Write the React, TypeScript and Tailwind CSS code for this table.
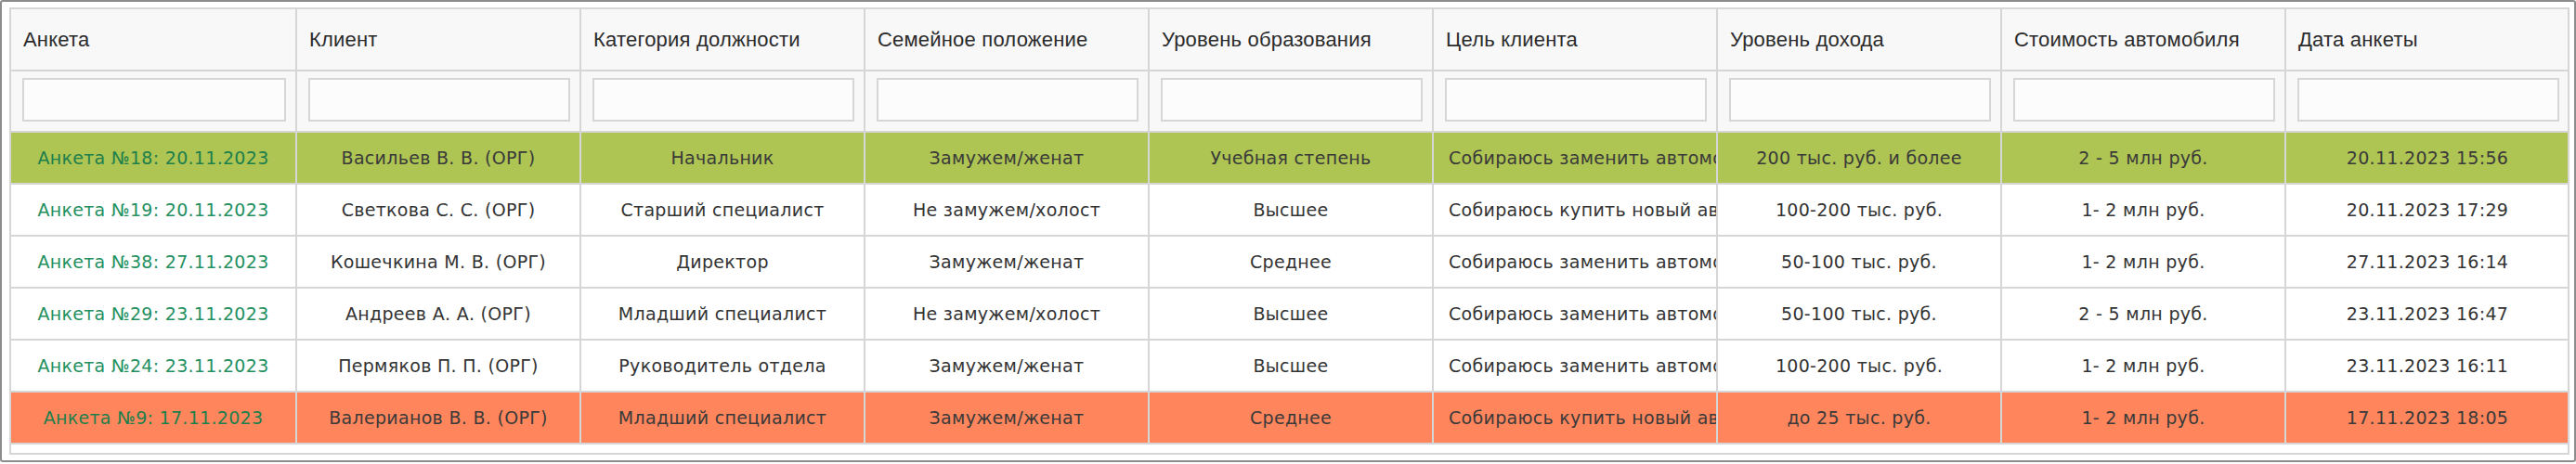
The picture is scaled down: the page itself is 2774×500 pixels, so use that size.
import React from 'react';

type Row = {
  id: string;
  client: string;
  job: string;
  family: string;
  edu: string;
  goal: string;
  income: string;
  car: string;
  date: string;
  tone?: 'green' | 'orange';
};

const headers = [
  'Анкета',
  'Клиент',
  'Категория должности',
  'Семейное положение',
  'Уровень образования',
  'Цель клиента',
  'Уровень дохода',
  'Стоимость автомобиля',
  'Дата анкеты',
];

const rows: Row[] = [
  { id: 'Анкета №18: 20.11.2023', client: 'Васильев В. В. (ОРГ)', job: 'Начальник', family: 'Замужем/женат', edu: 'Учебная степень', goal: 'Собираюсь заменить автомобиль', income: '200 тыс. руб. и более', car: '2 - 5 млн руб.', date: '20.11.2023 15:56', tone: 'green' },
  { id: 'Анкета №19: 20.11.2023', client: 'Светкова С. С. (ОРГ)', job: 'Старший специалист', family: 'Не замужем/холост', edu: 'Высшее', goal: 'Собираюсь купить новый автомобиль', income: '100-200 тыс. руб.', car: '1- 2 млн руб.', date: '20.11.2023 17:29' },
  { id: 'Анкета №38: 27.11.2023', client: 'Кошечкина М. В. (ОРГ)', job: 'Директор', family: 'Замужем/женат', edu: 'Среднее', goal: 'Собираюсь заменить автомобиль', income: '50-100 тыс. руб.', car: '1- 2 млн руб.', date: '27.11.2023 16:14' },
  { id: 'Анкета №29: 23.11.2023', client: 'Андреев А. А. (ОРГ)', job: 'Младший специалист', family: 'Не замужем/холост', edu: 'Высшее', goal: 'Собираюсь заменить автомобиль', income: '50-100 тыс. руб.', car: '2 - 5 млн руб.', date: '23.11.2023 16:47' },
  { id: 'Анкета №24: 23.11.2023', client: 'Пермяков П. П. (ОРГ)', job: 'Руководитель отдела', family: 'Замужем/женат', edu: 'Высшее', goal: 'Собираюсь заменить автомобиль', income: '100-200 тыс. руб.', car: '1- 2 млн руб.', date: '23.11.2023 16:11' },
  { id: 'Анкета №9: 17.11.2023', client: 'Валерианов В. В. (ОРГ)', job: 'Младший специалист', family: 'Замужем/женат', edu: 'Среднее', goal: 'Собираюсь купить новый автомобиль', income: 'до 25 тыс. руб.', car: '1- 2 млн руб.', date: '17.11.2023 18:05', tone: 'orange' },
];

const grid = 'grid grid-cols-[308px_repeat(7,306px)_304px]';

function Cell({ children, last, className = '' }: { children?: React.ReactNode; last?: boolean; className?: string }) {
  return (
    <div className={`border-b-2 border-[#d6d6d6] ${last ? '' : 'border-r-2'} ${className}`}>
      {children}
    </div>
  );
}

export default function App() {
  return (
    <div className="w-[2774px] h-[498px] border-2 border-[#8c8c8c] rounded-[3px] bg-white pt-[6px] pl-[8px] pr-[5px] font-['Liberation_Sans',sans-serif]">
      <div className="h-[482px] border-2 border-[#d6d6d6] overflow-hidden">
        {/* header */}
        <div className={`${grid} bg-[#f8f8f8]`}>
          {headers.map((h, i) => (
            <Cell key={h} last={i === 8} className="h-[67px] flex items-center pl-[13px] text-[22px] tracking-[0.2px] text-[#2b2b2b]">
              {h}
            </Cell>
          ))}
        </div>
        {/* filters */}
        <div className={`${grid} bg-[#f8f8f8]`}>
          {headers.map((h, i) => (
            <Cell key={h} last={i === 8} className="h-[66px] pt-[7px] pl-[12px] pr-[10px]">
              <input className="block w-full h-[47px] border-2 border-[#d6d6d6] bg-[#fcfcfc] outline-none" />
            </Cell>
          ))}
        </div>
        {/* rows */}
        {rows.map((r) => {
          const bg = r.tone === 'green' ? 'bg-[#aec453]' : r.tone === 'orange' ? 'bg-[#ff865c]' : 'bg-white';
          const txt = r.tone ? 'text-[#3a3a3a]' : 'text-[#333333]';
          const link = r.tone ? 'text-[#1d7f4c]' : 'text-[#23905f]';
          const vals = [r.client, r.job, r.family, r.edu];
          return (
            <div key={r.id} className={`${grid} ${bg} font-['DejaVu_Sans',sans-serif] text-[19px] tracking-[0.3px]`}>
              <Cell className={`h-[56px] flex items-center justify-center whitespace-nowrap ${link}`}>{r.id}</Cell>
              {vals.map((v, i) => (
                <Cell key={i} className={`h-[56px] flex items-center justify-center whitespace-nowrap ${txt}`}>{v}</Cell>
              ))}
              <Cell className={`h-[56px] flex items-center pl-[16px] whitespace-nowrap overflow-hidden ${txt}`}>{r.goal}</Cell>
              <Cell className={`h-[56px] flex items-center justify-center whitespace-nowrap ${txt}`}>{r.income}</Cell>
              <Cell className={`h-[56px] flex items-center justify-center whitespace-nowrap ${txt}`}>{r.car}</Cell>
              <Cell last className={`h-[56px] flex items-center justify-center whitespace-nowrap ${txt}`}>{r.date}</Cell>
            </div>
          );
        })}
      </div>
    </div>
  );
}
